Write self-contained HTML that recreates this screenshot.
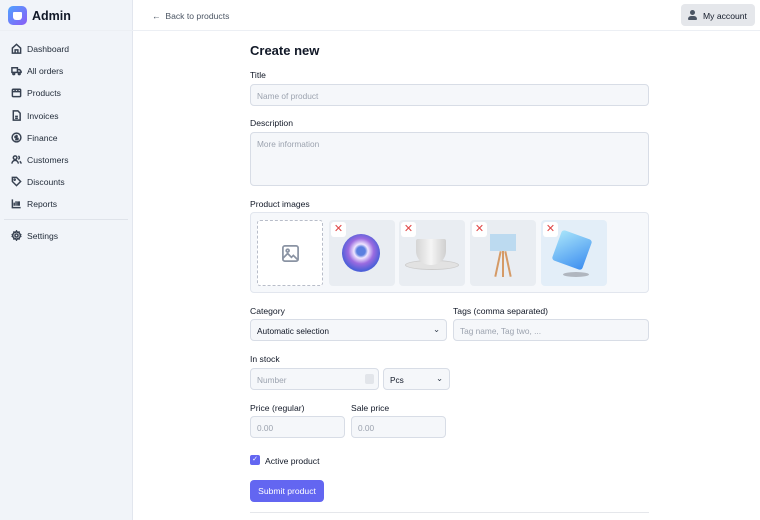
<!DOCTYPE html>
<html><head><style>
*{box-sizing:border-box;margin:0;padding:0}
body{width:760px;height:520px;overflow:hidden;font-family:"Liberation Sans",sans-serif;background:#fff;color:#111827;position:relative;font-size:9px}
.sb{position:absolute;left:0;top:0;width:133px;height:520px;background:#f1f4f9;border-right:1px solid #e2e6ee}
.logo{position:absolute;left:8px;top:6px;width:19px;height:19px;border-radius:5px;background:linear-gradient(135deg,#4fa3ff,#8b5cf6)}
.logo:after{content:"";position:absolute;left:5px;top:6px;width:9px;height:8px;background:#fff;border-radius:1px 1px 3px 3px}
.brand{position:absolute;left:32px;top:9px;font-size:12.5px;font-weight:bold}
.hl{position:absolute;left:0;top:30px;width:760px;height:1px;background:#eceff4}
.nav{position:absolute;left:11px;font-size:8.6px;color:#1f2937;display:flex;align-items:center}
.nav svg{width:11px;height:11px;margin-right:5px;fill:none;stroke:#374151;stroke-width:1.6}
.div{position:absolute;left:4px;top:219px;width:124px;height:1px;background:#dfe3ea}
.back{position:absolute;left:152px;top:11px;font-size:8.6px;color:#4b5563}
.acc{position:absolute;left:681px;top:4px;width:74px;height:22px;background:#e5e7eb;border-radius:4px;font-size:8.6px;padding:7px 0 0 22px}
.acc:before{content:"";position:absolute;left:9px;top:6px;width:5px;height:5px;border-radius:50%;background:#4b5563}
.acc:after{content:"";position:absolute;left:7px;top:12px;width:9px;height:4px;border-radius:3px 3px 1px 1px;background:#4b5563}
.t{position:absolute;font-size:8.6px;color:#111827}
.in{position:absolute;height:22px;background:#f5f7fa;border:1px solid #d8dde6;border-radius:4px;font-size:8.3px;color:#9ca3af;padding:6px 0 0 6px}
h1{position:absolute;left:250px;top:43px;font-size:13px;font-weight:bold}
.box{position:absolute;left:250px;top:212px;width:399px;height:81px;background:#f6f8fb;border:1px solid #e2e6ee;border-radius:4px}
.tile{position:absolute;top:220px;width:66px;height:66px;border-radius:4px;background:#e9edf2;overflow:hidden}
.x{position:absolute;left:2px;top:2px;width:15px;height:15px;background:#fff;border-radius:3px;color:#e04848;font-size:11px;text-align:center;line-height:15px}
</style></head><body>
<div class="sb"></div>
<div class="logo"></div><div class="brand">Admin</div>
<div class="hl"></div>
<div class="nav" style="top:43px"><svg viewBox="0 0 12 12"><path d="M1.5 5.5L6 1.5l4.5 4V11h-9z M4.5 11V7.5h3V11"/></svg>Dashboard</div>
<div class="nav" style="top:65px"><svg viewBox="0 0 12 12"><path d="M1 3h6v5H1z M7 5h2.5L11 7v1H7"/><circle cx="3" cy="9.5" r="1"/><circle cx="9" cy="9.5" r="1"/></svg>All orders</div>
<div class="nav" style="top:87px"><svg viewBox="0 0 12 12"><rect x="1.5" y="2.5" width="9" height="8" rx="1"/><path d="M1.5 5h9M4.5 2.5V5M7.5 2.5V5"/></svg>Products</div>
<div class="nav" style="top:110px"><svg viewBox="0 0 12 12"><path d="M2.5 1h5l2.5 2.5V11h-7.5z M4.5 7h3M4.5 9h3"/></svg>Invoices</div>
<div class="nav" style="top:132px"><svg viewBox="0 0 12 12"><circle cx="6" cy="6" r="4.8"/><path d="M7.5 4.5H5.3a1 1 0 000 2h1.4a1 1 0 010 2H4.5M6 3v6"/></svg>Finance</div>
<div class="nav" style="top:154px"><svg viewBox="0 0 12 12"><circle cx="4.5" cy="4" r="2"/><path d="M1 10.5a3.5 3.5 0 017 0M8 2.2a2 2 0 010 3.6M9.5 8a3 3 0 011.5 2.5"/></svg>Customers</div>
<div class="nav" style="top:176px"><svg viewBox="0 0 12 12"><path d="M1.5 1.5h4.5l4.5 4.5-4.5 4.5-4.5-4.5z"/><circle cx="4" cy="4" r=".6"/></svg>Discounts</div>
<div class="nav" style="top:198px"><svg viewBox="0 0 12 12"><path d="M1.5 1.5v9h9M3.5 8.5V5M5.5 8.5V3.5M7.5 8.5V4.5h1.5v4"/></svg>Reports</div>
<div class="div"></div>
<div class="nav" style="top:230px"><svg viewBox="0 0 12 12"><circle cx="6" cy="6" r="1.7"/><path d="M6 1l1 1.5 1.8-.3.3 1.8L10.6 5 10 6l.6 1-1.5 1 -.3 1.8-1.8-.3L6 11l-1-1.5-1.8.3-.3-1.8L1.4 7 2 6l-.6-1 1.5-1 .3-1.8 1.8.3z"/></svg>Settings</div>
<div class="back">← &nbsp;Back to products</div>
<div class="acc">My account</div>
<h1>Create new</h1>
<div class="t" style="left:250px;top:70px">Title</div>
<div class="in" style="left:250px;top:84px;width:399px">Name of product</div>
<div class="t" style="left:250px;top:118px">Description</div>
<div class="in" style="left:250px;top:132px;width:399px;height:54px">More information</div>
<div class="t" style="left:250px;top:199px">Product images</div>
<div class="box"></div>
<div style="position:absolute;left:257px;top:220px;width:66px;height:66px;border:1.5px dashed #b8bdc9;border-radius:3px;background:#fff">
<svg style="position:absolute;left:23px;top:23px" width="19" height="19" viewBox="0 0 20 20" fill="none" stroke="#8a93a3" stroke-width="1.8"><rect x="2" y="2" width="16" height="16" rx="2"/><circle cx="7" cy="7" r="1.5"/><path d="M2 15l5-5 4 4 2-2 5 5"/></svg></div>
<div class="tile" style="left:329px"><div style="position:absolute;left:13px;top:14px;width:38px;height:38px;border-radius:50%;background:radial-gradient(circle at 50% 45%,#5b7fe0 15%,#f0e6ff 25%,#9b6be0 45%,#4a5fd8 70%,#c9a0f0 100%)"></div><div class="x">✕</div></div>
<div class="tile" style="left:399px"><div style="position:absolute;left:6px;top:40px;width:54px;height:10px;border-radius:50%;background:#e2e2e2;border:1px solid #ccc"></div><div style="position:absolute;left:17px;top:19px;width:30px;height:26px;border-radius:2px 2px 14px 14px;background:linear-gradient(90deg,#d5d5d5,#f5f5f5,#cfcfcf)"></div><div class="x">✕</div></div>
<div class="tile" style="left:470px"><div style="position:absolute;left:20px;top:14px;width:26px;height:17px;background:#bcdaf0"></div><div style="position:absolute;left:32px;top:31px;width:2px;height:26px;background:#d59a66"></div><div style="position:absolute;left:27px;top:31px;width:2px;height:26px;background:#d59a66;transform:rotate(12deg)"></div><div style="position:absolute;left:37px;top:31px;width:2px;height:26px;background:#d59a66;transform:rotate(-12deg)"></div><div class="x">✕</div></div>
<div class="tile" style="left:541px;background:#e3eef8"><div style="position:absolute;left:15px;top:14px;width:32px;height:32px;background:linear-gradient(135deg,#a8e4fa,#3d8ef0);transform:rotate(20deg);border-radius:3px"></div><div style="position:absolute;left:22px;top:52px;width:26px;height:5px;border-radius:50%;background:#b0b6bf"></div><div class="x">✕</div></div>
<div class="t" style="left:250px;top:306px">Category</div>
<div class="in" style="left:250px;top:319px;width:197px;color:#111827;background:#f5f7fa">Automatic selection<span style="position:absolute;right:6px;top:4px;color:#374151">⌄</span></div>
<div class="t" style="left:453px;top:306px">Tags (comma separated)</div>
<div class="in" style="left:453px;top:319px;width:196px">Tag name, Tag two, ...</div>
<div class="t" style="left:250px;top:354px">In stock</div>
<div class="in" style="left:250px;top:368px;width:129px">Number<span style="position:absolute;right:4px;top:5px;width:9px;height:10px;background:#e2e5ea;border-radius:2px"></span></div>
<div class="in" style="left:383px;top:368px;width:67px;color:#111827">Pcs<span style="position:absolute;right:6px;top:4px;color:#374151">⌄</span></div>
<div class="t" style="left:250px;top:403px">Price (regular)</div>
<div class="t" style="left:351px;top:403px">Sale price</div>
<div class="in" style="left:250px;top:416px;width:95px">0.00</div>
<div class="in" style="left:351px;top:416px;width:95px">0.00</div>
<div style="position:absolute;left:250px;top:455px;width:10px;height:10px;border-radius:2px;background:#6366f1;color:#fff;font-size:7px;text-align:center;line-height:10px">✓</div>
<div class="t" style="left:265px;top:456px">Active product</div>
<div style="position:absolute;left:250px;top:480px;width:74px;height:22px;border-radius:4px;background:#6366f1;color:#fff;font-size:8.6px;text-align:center;line-height:22px">Submit product</div>
<div style="position:absolute;left:250px;top:512px;width:399px;height:1px;background:#e5e7eb"></div>
</body></html>
